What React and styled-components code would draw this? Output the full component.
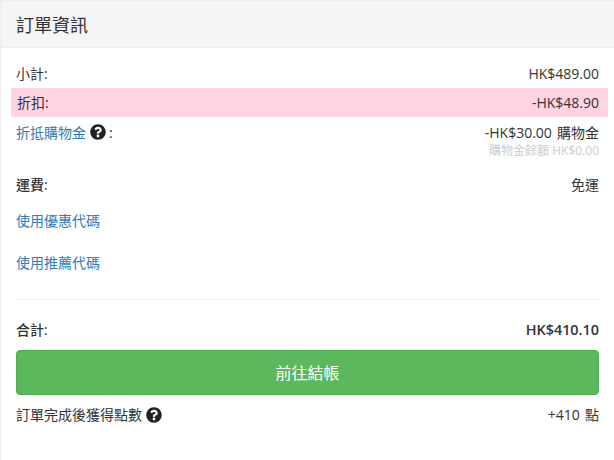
import React from "react";
import styled, { createGlobalStyle } from "styled-components";
import { FaQuestionCircle } from "react-icons/fa";

const Global = createGlobalStyle`
  html, body { margin: 0; padding: 0; background: #fff; }
  body {
    font-family: "Open Sans", "Noto Sans CJK TC", sans-serif;
    font-size: 14px;
    color: #333;
  }
`;

const Panel = styled.section`
  width: 614px;
  height: 460px;
  box-sizing: border-box;
  border-left: 1px solid #eee;
  border-top: 1px solid #eee;
  overflow: hidden;
`;

const Heading = styled.h3`
  margin: 0;
  height: 47px;
  box-sizing: border-box;
  padding: 0 15px;
  display: flex;
  align-items: center;
  background: #f5f5f5;
  border-bottom: 1px solid #eee;
  font-size: 18px;
  font-weight: 400;
  color: #333;
`;

const Body = styled.div`
  padding: 11px 15px 0;
  display: flex;
  flex-direction: column;
`;

const Row = styled.div`
  display: flex;
  justify-content: space-between;
  align-items: ${(p) => (p.$top ? "flex-start" : "center")};
  height: ${(p) => p.$h}px;
  padding-top: ${(p) => p.$pt || 0}px;
  box-sizing: border-box;
  line-height: 20px;
`;

const HighlightRow = styled(Row)`
  background: #ffd3e1;
  margin: 0 -9px 0 -5px;
  padding: 0 9px 0 6px;
`;

const Label = styled.span`
  display: inline-flex;
  align-items: center;
  font-size: 14px;
  font-weight: ${(p) => (p.$bold ? 500 : 400)};
  color: ${(p) => p.$color || "#333"};
`;

const LinkText = styled.a`
  color: #337ab7;
  font-size: 14px;
  text-decoration: none;
`;

const Value = styled.span`
  font-size: ${(p) => (p.$total ? 14.4 : 14)}px;
  color: #333;
  font-weight: ${(p) => (p.$total ? 600 : 400)};
  word-spacing: 1.5px;
`;

const Stack = styled.div`
  display: flex;
  flex-direction: column;
  align-items: flex-end;
`;

const Sub = styled.small`
  font-size: 12px;
  line-height: 15px;
  color: #ccc;
`;

const Help = styled(FaQuestionCircle)`
  width: 16px;
  height: 16px;
  color: #222;
  margin: 0 ${(p) => p.$after || 0}px ${(p) => (p.$lift ? 3 : 0)}px 4px;
`;

const LinkRow = styled.div`
  height: 42px;
  display: flex;
  align-items: center;
`;

const Divider = styled.hr`
  margin: 16px 0 20px;
  border: 0;
  border-top: 1px solid #eee;
`;

const Checkout = styled.button`
  height: 45px;
  width: 100%;
  margin-top: 10px;
  padding: 0 0 2px;
  border: 1px solid #4cae4c;
  border-radius: 4px;
  background: #5cb85c;
  color: #fff;
  font: inherit;
  font-size: 16px;
`;

export default function App() {
  return (
    <>
      <Global />
      <Panel>
        <Heading>訂單資訊</Heading>
        <Body>
          <Row $h={29}>
            <Label>小計:</Label>
            <Value>HK$489.00</Value>
          </Row>
          <HighlightRow $h={29}>
            <Label>折扣:</Label>
            <Value>-HK$48.90</Value>
          </HighlightRow>
          <Row $h={53} $pt={6} $top>
            <Label $color="#337ab7">
              折抵購物金
              <Help $after={3} $lift />
              <Label>:</Label>
            </Label>
            <Stack>
              <Value>-HK$30.00 購物金</Value>
              <Sub>購物金餘額 HK$0.00</Sub>
            </Stack>
          </Row>
          <Row $h={29}>
            <Label $bold>運費:</Label>
            <Value>免運</Value>
          </Row>
          <LinkRow><LinkText>使用優惠代碼</LinkText></LinkRow>
          <LinkRow><LinkText>使用推薦代碼</LinkText></LinkRow>
          <Divider />
          <Row $h={20}>
            <Label $bold>合計:</Label>
            <Value $total>HK$410.10</Value>
          </Row>
          <Checkout>前往結帳</Checkout>
          <Row $h={40}>
            <Label>
              訂單完成後獲得點數
              <Help />
            </Label>
            <Value>+410 點</Value>
          </Row>
        </Body>
      </Panel>
    </>
  );
}
